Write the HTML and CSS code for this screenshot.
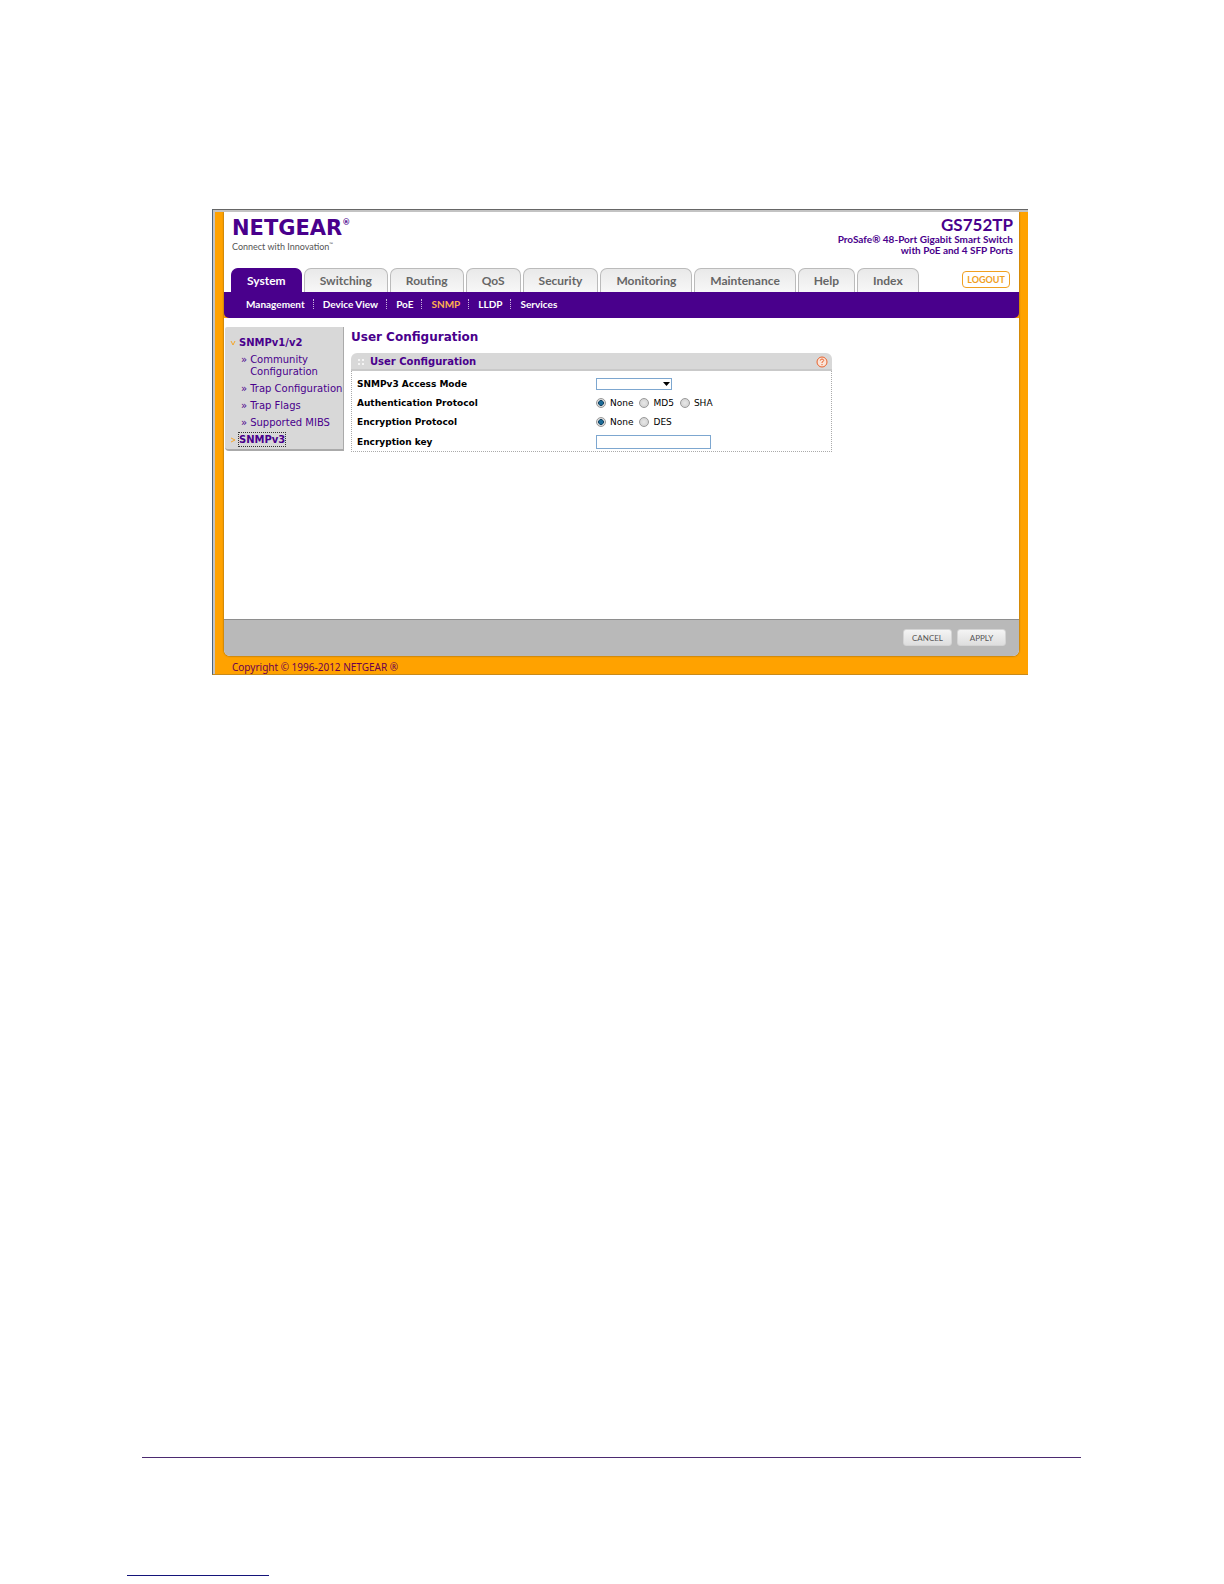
FILE: index.html
```html
<!DOCTYPE html>
<html lang="en">
<head>
<meta charset="utf-8">
<title>User Configuration</title>
<link rel="stylesheet" href="styles.css">
</head>
<body>
<div class="frame">
  <div class="shell">
    <header class="header">
      <div class="brand">
        <div class="logo">NETGEAR<sup class="reg">®</sup></div>
        <div class="tagline">Connect with Innovation<sup class="tm">™</sup></div>
      </div>
      <div class="product">
        <div class="model">GS752TP</div>
        <div class="desc">ProSafe® 48-Port Gigabit Smart Switch<br>with PoE and 4 SFP Ports</div>
      </div>
    </header>
    <div class="tabbar">
      <nav class="tabs">
        <a class="tab active" href="#">System</a>
        <a class="tab" href="#">Switching</a>
        <a class="tab" href="#">Routing</a>
        <a class="tab" href="#">QoS</a>
        <a class="tab" href="#">Security</a>
        <a class="tab" href="#">Monitoring</a>
        <a class="tab" href="#">Maintenance</a>
        <a class="tab" href="#">Help</a>
        <a class="tab" href="#">Index</a>
      </nav>
      <button class="logout" type="button">LOGOUT</button>
    </div>
    <div class="subwrap">
      <nav class="subnav">
        <a href="#">Management</a>
        <a href="#">Device View</a>
        <a href="#">PoE</a>
        <a class="current" href="#">SNMP</a>
        <a href="#">LLDP</a>
        <a href="#">Services</a>
      </nav>
    </div>
    <div class="content">
      <aside class="side">
        <a class="group" href="#"><svg class="mark" viewBox="0 0 6 6"><path d="M1 1l2 4 2-4" /></svg><span>SNMPv1/v2</span></a>
        <ul class="items">
          <li><a href="#">Community Configuration</a></li>
          <li><a href="#">Trap Configuration</a></li>
          <li><a href="#">Trap Flags</a></li>
          <li><a href="#">Supported MIBS</a></li>
        </ul>
        <a class="group" href="#"><svg class="mark" viewBox="0 0 6 6"><path d="M1 1l4 2-4 2" /></svg><span class="focused">SNMPv3</span></a>
      </aside>
      <main class="main">
        <h1 class="title">User Configuration</h1>
        <section class="panel">
          <div class="panel-head">
            <svg class="grip" viewBox="0 0 8 8"><path d="M1 1h2v2H1zM5 1h2v2H5zM1 5h2v2H1zM5 5h2v2H5z" /></svg>
            <h2 class="panel-title">User Configuration</h2>
            <a class="help" href="#" aria-label="Help"><svg viewBox="0 0 12 12"><circle cx="6" cy="6" r="5" /><path d="M4.3 4.6Q4.4 3 6 3T7.7 4.5Q7.7 5.4 6 6.2V7M6 8v1.2" /></svg></a>
          </div>
          <form class="form" id="user-form">
            <label for="mode">SNMPv3 Access Mode</label>
            <div class="pick">
              <select id="mode"><option></option></select>
              <svg class="arrow" viewBox="0 0 7 4"><path d="M0 0h7L3.500 4z" /></svg>
            </div>
            <span class="label" id="auth-label">Authentication Protocol</span>
            <div class="radios" role="radiogroup" aria-labelledby="auth-label">
              <label><input type="radio" name="auth" checked>None</label>
              <label><input type="radio" name="auth">MD5</label>
              <label><input type="radio" name="auth">SHA</label>
            </div>
            <span class="label" id="enc-label">Encryption Protocol</span>
            <div class="radios" role="radiogroup" aria-labelledby="enc-label">
              <label><input type="radio" name="enc" checked>None</label>
              <label><input type="radio" name="enc">DES</label>
            </div>
            <label for="key">Encryption key</label>
            <input class="key" id="key" type="text">
          </form>
        </section>
      </main>
    </div>
    <div class="actions">
      <button class="btn" type="reset" form="user-form">CANCEL</button>
      <button class="btn" type="submit" form="user-form">APPLY</button>
    </div>
  </div>
  <footer class="copyright">Copyright © 1996-2012 NETGEAR ®</footer>
</div>
<div class="rule"></div>
<div class="link-line"></div>
</body>
</html>
```
FILE: styles.css
```css
* { box-sizing: border-box; }

body {
  margin: 0;
  min-height: 100vh;
  padding: 209px 0 8px;
  display: flex;
  flex-direction: column;
  background: #fff;
  font-family: "DejaVu Sans", sans-serif;
  font-size: 10px;
  color: #000;
}

a { color: inherit; text-decoration: none; }
button, input, select { font: inherit; margin: 0; }

.frame {
  margin: 0 196px 0 212px;
  border-top: 1px solid #666;
  border-left: 1px solid #4d6478;
  border-bottom: 1px solid #c88a1c;
  background: #ffa200;
  box-shadow: inset 2px 2px #c3c3c3;
  padding: 2px 9px 0 11px;
}

.shell {
  background: #fff;
  border-radius: 0 0 6px 6px;
  box-shadow: 0 0 2px #5e4a20;
  clip-path: inset(0 -2px -2px -2px);
}

.header {
  display: flex;
  justify-content: space-between;
  height: 56px;
  padding: 4px 6px 0 8px;
  color: #49008c;
}

.logo {
  font-size: 21px;
  font-weight: bold;
  line-height: 24px;
  display: flex;
}
.reg { font-size: 8px; line-height: 14px; }
.tagline {
  font-family: Lato, sans-serif;
  font-size: 9px;
  line-height: 14px;
  color: #555;
}
.tm { font-size: 5px; line-height: 0; }

.product { text-align: right; font-family: Lato, sans-serif; }
.model { font-size: 17px; font-weight: bold; line-height: 18px; }
.desc {
  font-size: 10px;
  font-weight: bold;
  line-height: 11px;
}

.tabbar {
  display: flex;
  justify-content: space-between;
  align-items: flex-start;
  padding: 0 9px 0 7px;
}
.tabs { display: flex; gap: 2px; font-family: Lato, sans-serif; }
.tab {
  height: 24px;
  padding: 0 15px;
  border: 1px solid #bbb;
  border-bottom: 0;
  border-radius: 7px 7px 0 0;
  background: linear-gradient(#e9e9e9, #f7f7f7);
  color: #666;
  font-size: 12px;
  font-weight: bold;
  line-height: 24px;
}
.tab.active { background: #49008c; border-color: #49008c; color: #fff; }

.logout {
  width: 48px;
  height: 17px;
  margin-top: 3px;
  padding: 0;
  border: 1px solid #f0a020;
  border-radius: 4px;
  background: #fff;
  color: #f0a020;
  font-family: Lato, sans-serif;
  font-size: 9px;
  font-weight: bold;
}

.subwrap { background: #ffa200; }
.subnav {
  display: flex;
  align-items: center;
  height: 26px;
  padding: 0 22px 2px;
  border-radius: 0 0 5px 5px;
  background: #49008c;
  color: #fff;
  font-family: Lato, sans-serif;
  font-size: 10px;
  font-weight: bold;
}
.subnav a { line-height: 10px; }
.subnav a + a { margin-left: 8px; padding-left: 9px; border-left: 1px dotted #c9b3dd; }
.subnav .current { color: #ffb04d; }

.content {
  display: flex;
  align-items: flex-start;
  gap: 7px;
  min-height: 301px;
  padding: 9px 0 0 1px;
}

.side {
  width: 119px;
  padding: 9px 0 3px 5px;
  border-right: 1px solid #aaa;
  border-bottom: 2px solid #aaa;
  border-radius: 2px 0 0 4px;
  background: #d8d8d8;
  color: #49008c;
}
.group {
  display: flex;
  align-items: center;
  gap: 3px;
  line-height: 13px;
  font-weight: bold;
}
.mark { width: 6px; height: 6px; fill: none; stroke: #f5a62a; }
.focused { outline: 1px dotted #333; }
.items { margin: 2px 0; padding: 0 0 0 11px; list-style: none; }
.items li {
  display: flex;
  gap: 3px;
  padding: 3px 0 2px;
  line-height: 12px;
}
.items li::before { content: "»"; }

.main { flex: 1; }
.title { margin: 3px 0 9px; font-size: 12px; line-height: 14px; color: #49008c; }

.panel { width: 481px; max-width: 100%; }
.panel-head {
  display: flex;
  align-items: center;
  height: 18px;
  padding: 1px 4px 0 6px;
  border-bottom: 2px solid #c9c9c9;
  border-radius: 6px 6px 0 0;
  background: #d8d8d8;
}
.grip { width: 8px; height: 8px; margin-right: 5px; fill: #f4f4f4; }
.panel-title { margin: 0; flex: 1; font-size: 10px; line-height: 15px; color: #49008c; }
.help, .help svg { display: block; width: 12px; height: 12px; }
.help svg { fill: #fbe4d8; stroke: #e8622c; }

.form {
  display: grid;
  grid-template-columns: 239px 1fr;
  grid-template-rows: 20px 18px 20px 19px;
  align-items: center;
  padding: 3px 0 0 5px;
  border: 1px dotted #aaa;
  border-top: 0;
  font-size: 9px;
}
.form > label, .label {
  font-weight: bold;
  line-height: 12px;
}

.pick { position: relative; width: 76px; height: 12px; }
.pick select {
  display: block;
  appearance: none;
  width: 100%;
  height: 12px;
  padding: 0;
  border: 1px solid #7da7d0;
  border-radius: 0;
  background: #fff;
}
.arrow { position: absolute; right: 2px; top: 4px; width: 7px; height: 4px; }

.radios { display: flex; gap: 6px; }
.radios label { display: flex; align-items: center; gap: 4px; line-height: 12px; }
.radios input {
  appearance: none;
  width: 10px;
  height: 10px;
  border: 1px solid #999;
  border-radius: 50%;
  background: radial-gradient(#e8e8e8, #ccc);
}
.radios input:checked { background: radial-gradient(#1c6a96 0 30%, #12405f 45%, #ddd 55%); }

.key {
  width: 115px;
  height: 14px;
  padding: 0 2px;
  border: 1px solid #7da7d0;
}

.actions {
  display: flex;
  justify-content: flex-end;
  gap: 5px;
  height: 37px;
  padding: 9px 13px 0 0;
  border-top: 1px solid #8e8e8e;
  border-radius: 0 0 6px 6px;
  background: #b9b9b9;
}
.btn {
  width: 49px;
  height: 17px;
  padding: 0;
  border: 1px solid #d4d4d4;
  border-radius: 3px;
  background: linear-gradient(#f4f4f4, #dedede);
  color: #555;
  font-family: Lato, sans-serif;
  font-size: 8px;
}

.copyright {
  padding: 4px 0 0 8px;
  font-family: "Noto Sans", sans-serif;
  font-size: 10px;
  line-height: 14px;
  color: #6b0050;
}

.rule { margin: auto 143px 117px 142px; border-top: 1px solid #4b2a70; }
.link-line { width: 142px; margin-left: 127px; border-top: 1px solid #14147a; }
```
